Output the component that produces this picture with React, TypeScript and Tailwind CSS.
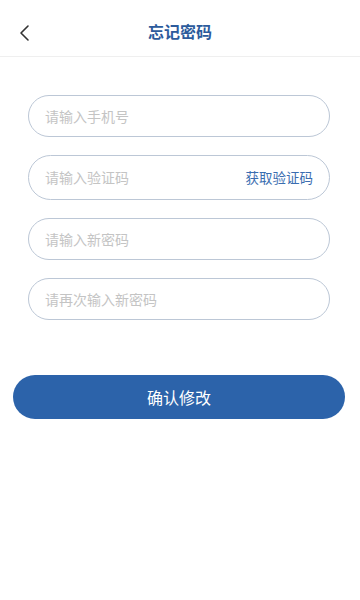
import React from "react";

const font = { fontFamily: '"Noto Sans CJK SC", "Noto Sans", sans-serif' };

function Field({ placeholder, action, tall }: { placeholder: string; action?: string; tall?: boolean }) {
  return (
    <div
      className={
        "flex items-center rounded-full border border-[#bcc7d6] pl-4 pr-4 " + (tall ? "h-[45px]" : "h-[42px]")
      }
    >
      <input
        placeholder={placeholder}
        className="flex-1 min-w-0 bg-transparent outline-none text-[14px] text-gray-700 placeholder:text-[#c4c4c4]"
      />
      {action && <span className="text-[13.5px] text-[#3a6db0] shrink-0">{action}</span>}
    </div>
  );
}

export default function App() {
  return (
    <div className="w-[360px] h-[600px] bg-white" style={font}>
      <div className="relative flex items-center justify-center h-[57px] border-b border-[#efefef]">
        <button className="absolute left-[14px] top-[20px] p-1">
          <svg width="14" height="18" viewBox="0 0 14 18" fill="none">
            <path d="M10 2 L3 9 L10 16" stroke="#333" strokeWidth="1.6" strokeLinecap="round" strokeLinejoin="round" />
          </svg>
        </button>
        <h1 className="text-[16px] font-bold text-[#2c5b9c] mt-[6px]">忘记密码</h1>
      </div>

      <div className="flex flex-col gap-[18px] px-[28px] pt-[38px] w-[358px]">
        <Field placeholder="请输入手机号" />
        <Field placeholder="请输入验证码" action="获取验证码" tall />
        <Field placeholder="请输入新密码" />
        <Field placeholder="请再次输入新密码" />
      </div>

      <div className="px-[13px] pt-[55px] pr-[15px]">
        <button className="w-full h-[44px] rounded-full bg-[#2c63aa] text-white text-[16px]">
          确认修改
        </button>
      </div>
    </div>
  );
}
